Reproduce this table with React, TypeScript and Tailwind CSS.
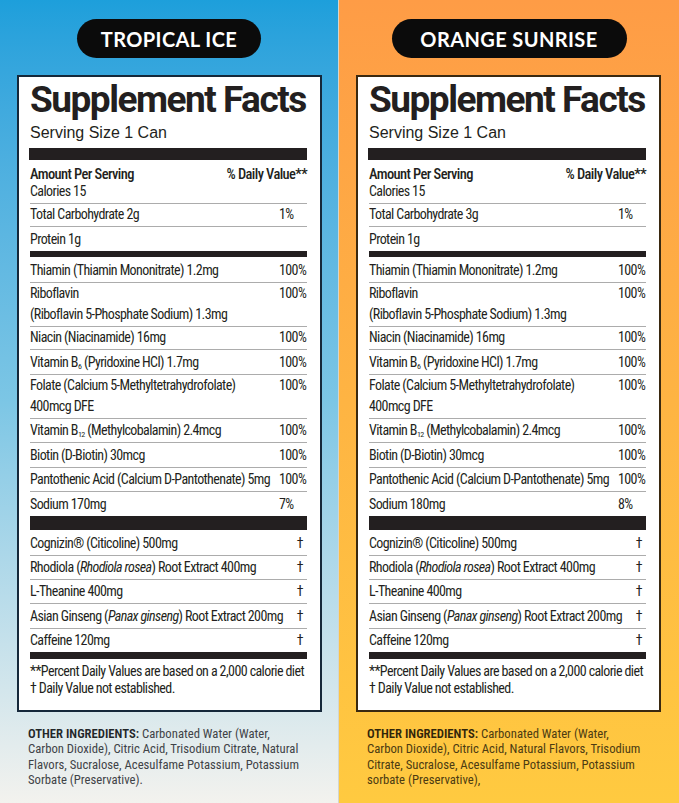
import type { ReactNode } from 'react';

type Line = { h: string; label: ReactNode; dv: string; two?: boolean };

function Row({ h, label, dv, two }: Line) {
  return (
    <div className={`${h} flex items-end border-b border-[#acacac] pb-[1px] leading-[21px] last:border-b-0`}>
      <div className="min-w-0 flex-1 whitespace-nowrap">{label}</div>
      <div
        className={`w-[28px] shrink-0 whitespace-nowrap ${two ? 'self-start' : ''} ${dv === '†' ? 'pr-[4px] text-right' : ''}`}
      >
        {dv}
      </div>
    </div>
  );
}

const B = ({ n }: { n: string }) => (
  <>
    B<sub className="text-[8px]">{n}</sub>
  </>
);

type Flavor = {
  name: string;
  pill: string;
  bg: string;
  border: string;
  ink: string;
  inkBold: string;
  carb: string;
  sodium: string;
  sodiumDv: string;
  other: string[];
  edge: string;
};

function Panel({ f }: { f: Flavor }) {
  const vitamins: Line[] = [
    { h: 'h-[26px]', label: 'Thiamin (Thiamin Mononitrate) 1.2mg', dv: '100%' },
    {
      h: 'h-[44px]',
      label: (
        <>
          Riboflavin
          <br />
          (Riboflavin 5-Phosphate Sodium) 1.3mg
        </>
      ),
      dv: '100%',
      two: true,
    },
    { h: 'h-[23px]', label: 'Niacin (Niacinamide) 16mg', dv: '100%' },
    {
      h: 'h-[25px]',
      label: (
        <>
          Vitamin <B n="6" /> (Pyridoxine HCl) 1.7mg
        </>
      ),
      dv: '100%',
    },
    {
      h: 'h-[44px]',
      label: (
        <>
          Folate (Calcium 5-Methyltetrahydrofolate)
          <br />
          400mcg DFE
        </>
      ),
      dv: '100%',
      two: true,
    },
    {
      h: 'h-[24px]',
      label: (
        <>
          Vitamin <B n="12" /> (Methylcobalamin) 2.4mcg
        </>
      ),
      dv: '100%',
    },
    { h: 'h-[25px]', label: 'Biotin (D-Biotin) 30mcg', dv: '100%' },
    { h: 'h-[24px]', label: 'Pantothenic Acid (Calcium D-Pantothenate) 5mg', dv: '100%' },
    { h: 'h-[24px]', label: `Sodium ${f.sodium}`, dv: f.sodiumDv },
  ];

  const herbs: Line[] = [
    { h: 'h-[26px]', label: 'Cognizin® (Citicoline) 500mg', dv: '†' },
    {
      h: 'h-[24px]',
      label: (
        <>
          Rhodiola (<i>Rhodiola rosea</i>) Root Extract 400mg
        </>
      ),
      dv: '†',
    },
    { h: 'h-[24px]', label: 'L-Theanine 400mg', dv: '†' },
    {
      h: 'h-[25px]',
      label: (
        <>
          Asian Ginseng (<i>Panax ginseng</i>) Root Extract 200mg
        </>
      ),
      dv: '†',
    },
    { h: 'h-[23px]', label: 'Caffeine 120mg', dv: '†' },
  ];

  return (
    <div className={`flex h-[803px] flex-col ${f.bg} ${f.edge}`}>
      <div className="flex justify-center pt-[19px]">
        <div
          className={`${f.pill} flex h-[39px] items-center justify-center rounded-full bg-[#0b0b0b] font-['Lato',sans-serif] text-[20px] font-bold tracking-[0.4px] text-white`}
        >
          {f.name}
        </div>
      </div>

      <div
        className={`ml-[17px] mt-[17px] w-[305px] border-2 ${f.border} bg-white pl-[11px] pr-[13px] text-[#231f20]`}
      >
        <div className="whitespace-nowrap pt-[3px] font-['Roboto',sans-serif] text-[37px] font-bold leading-[40px] tracking-[-1.5px]">
          Supplement Facts
        </div>
        <div className="mt-[4px] font-['Liberation_Sans',Arial,sans-serif] text-[16px] leading-[18px]">
          Serving Size 1 Can
        </div>
        <div className="-ml-[1px] mt-[6px] h-[12px] bg-[#231f20]" />

        <div className="font-['Roboto_Condensed','Roboto',sans-serif] text-[14px] tracking-[-0.6px] [font-stretch:condensed]">
          <div className="h-[44px] border-b border-[#acacac] pt-[7px] leading-[16px]">
            <div className="flex justify-between text-[14.5px] font-medium">
              <span>Amount Per Serving</span>
              <span>% Daily Value**</span>
            </div>
            <div>Calories 15</div>
          </div>

          <div>
            <Row h="h-[23px]" label={`Total Carbohydrate ${f.carb}`} dv="1%" />
            <Row h="h-[24px]" label="Protein 1g" dv="" />
          </div>
          <div className="h-[6px] bg-[#231f20]" />

          <div>
            {vitamins.map((v, i) => (
              <Row key={i} {...v} />
            ))}
          </div>
          <div className="h-[14px] bg-[#231f20]" />

          <div>
            {herbs.map((v, i) => (
              <Row key={i} {...v} />
            ))}
          </div>
          <div className="h-[7px] bg-[#231f20]" />

          <div className="whitespace-nowrap pb-[13px] pt-[4px] leading-[17px]">
            <div>**Percent Daily Values are based on a 2,000 calorie diet</div>
            <div>† Daily Value not established.</div>
          </div>
        </div>
      </div>

      <div
        className={`mt-[14px] pl-[28px] font-['Roboto_Condensed','Roboto',sans-serif] text-[12.7px] leading-[15.3px] [font-stretch:condensed] ${f.ink}`}
      >
        {f.other.map((l, i) => (
          <div key={i} className="whitespace-nowrap">
            {i === 0 && <span className={`font-semibold ${f.inkBold}`}>OTHER INGREDIENTS: </span>}
            {l}
          </div>
        ))}
      </div>
    </div>
  );
}

const flavors: Flavor[] = [
  {
    name: 'TROPICAL ICE',
    pill: 'w-[184px]',
    bg: 'w-[339px] bg-linear-to-b from-[#1d9fdb] via-[#7cc6e5] to-[#f3f2ee]',
    edge: 'border-r border-[#d3d6cf]',
    border: 'border-[#15283a]',
    ink: 'text-[#3f4347]',
    inkBold: 'text-[#222629]',
    carb: '2g',
    sodium: '170mg',
    sodiumDv: '7%',
    other: [
      'Carbonated Water (Water,',
      'Carbon Dioxide), Citric Acid, Trisodium Citrate, Natural',
      'Flavors, Sucralose, Acesulfame Potassium, Potassium',
      'Sorbate (Preservative).',
    ],
  },
  {
    name: 'ORANGE SUNRISE',
    pill: 'w-[235px]',
    bg: 'w-[340px] bg-linear-to-b from-[#fe9c46] via-[#feb443] to-[#ffca40]',
    edge: '',
    border: 'border-[#3a2910]',
    ink: 'text-[#4c3b12]',
    inkBold: 'text-[#30250a]',
    carb: '3g',
    sodium: '180mg',
    sodiumDv: '8%',
    other: [
      'Carbonated Water (Water,',
      'Carbon Dioxide), Citric Acid, Natural Flavors, Trisodium',
      'Citrate, Sucralose, Acesulfame Potassium, Potassium',
      'sorbate (Preservative),',
    ],
  },
];

export default function App() {
  return (
    <div className="flex h-[803px] w-[679px] overflow-hidden">
      {flavors.map((f) => (
        <Panel key={f.name} f={f} />
      ))}
    </div>
  );
}
